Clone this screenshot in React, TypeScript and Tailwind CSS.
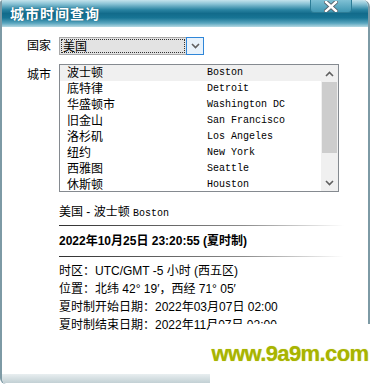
import React from 'react';

const cities = [
  { cn: '波士顿', en: 'Boston' },
  { cn: '底特律', en: 'Detroit' },
  { cn: '华盛顿市', en: 'Washington DC' },
  { cn: '旧金山', en: 'San Francisco' },
  { cn: '洛杉矶', en: 'Los Angeles' },
  { cn: '纽约', en: 'New York' },
  { cn: '西雅图', en: 'Seattle' },
  { cn: '休斯顿', en: 'Houston' },
];

const CloseButton = () => (
  <div className="absolute left-[308px] top-0 w-[42px] h-[13px] rounded-b-[4px] border border-t-0 border-[#2c7c96] bg-[linear-gradient(to_bottom,#7fc0d4,#3f96b2)] flex items-center justify-center">
    <svg width="14" height="11" viewBox="0 0 14 11">
      <path d="M2 1 L12 10 M12 1 L2 10" stroke="#55606a" strokeWidth="4.2" strokeLinecap="square" />
      <path d="M2 1 L12 10 M12 1 L2 10" stroke="#ffffff" strokeWidth="2.4" strokeLinecap="square" />
    </svg>
  </div>
);

const Chevron = ({ up }: { up?: boolean }) => (
  <svg width="9" height="6" viewBox="0 0 9 6">
    <path d={up ? 'M1 5 L4.5 1.5 L8 5' : 'M1 1 L4.5 4.5 L8 1'} stroke="#606060" strokeWidth="1.6" fill="none" />
  </svg>
);

export default function App() {
  return (
    <div className="relative w-[370px] h-[384px] bg-white overflow-hidden text-[12px] text-black font-['Liberation_Sans','Noto_Sans_CJK_SC',sans-serif]">
      <div className="flex flex-col h-full border-x-2 border-[#7d9aa5] rounded-tl-[3px] rounded-tr-[7px] rounded-bl-[6px] overflow-hidden">
        {/* title bar */}
        <div className="relative h-[27px] shrink-0 bg-[linear-gradient(to_bottom,#c4e3ec_0%,#8cc4d6_14%,#2a84a2_36%,#126b8b_50%,#177494_66%,#5aa6bf_86%,#b6d9e3_100%)]">
          <div className="pl-[8px] pt-[6px] text-[14px] leading-[16px] font-bold text-white tracking-[1px] [text-shadow:0_0_1px_#0b4e66]">
            城市时间查询
          </div>
          <CloseButton />
        </div>

        {/* body */}
        <div className="flex-1 flex flex-col pl-[25px] pt-[10px]">
          <div className="flex items-center">
            <span className="w-[32px] leading-[18px]">国家</span>
            <div className="flex w-[145px] h-[18px] border border-[#a8a8a8] bg-[#e3e3e3]">
              <div className="flex-1 m-[1px] border border-dotted border-[#333] leading-[14px] pl-[1px]">美国</div>
              <div className="w-[18px] h-[18px] -mt-px -mr-px border border-[#2f86d8] bg-[#e8f2fb] flex items-center justify-center">
                <Chevron />
              </div>
            </div>
          </div>

          <div className="flex items-start mt-[9px]">
            <span className="w-[32px] pt-[3px] leading-[16px]">城市</span>
            <div className="flex w-[280px] h-[128px] border border-[#858a90] bg-white">
              <div className="flex-1 flex flex-col overflow-hidden">
                {cities.map((c, i) => (
                  <div key={c.en} className={`flex h-[16px] shrink-0 items-center pl-[7px] ${i === 0 ? 'bg-[#f0f0f0]' : ''}`}>
                    <span className="w-[140px] leading-[16px]">{c.cn}</span>
                    <span className="font-['Liberation_Mono',monospace] text-[10px] leading-[16px]">{c.en}</span>
                  </div>
                ))}
              </div>
              <div className="w-[17px] flex flex-col bg-[#f0f0f0]">
                <div className="h-[17px] flex items-center justify-center">
                  <Chevron up />
                </div>
                <div className="h-[71px] mx-[1px] bg-[#cdcdcd]" />
                <div className="flex-1" />
                <div className="h-[17px] flex items-center justify-center">
                  <Chevron />
                </div>
              </div>
            </div>
          </div>

          <div className="flex flex-col pl-[32px] mt-[12px]">
            <div className="leading-[16px]">
              美国 - 波士顿 <span className="font-['Liberation_Mono',monospace] text-[10px]">Boston</span>
            </div>
            <div className="mt-[3px] w-[285px] h-px bg-[linear-gradient(to_right,#303030,#8c8c8c_65%,#ffffff)]" />
            <div className="mt-[6px] leading-[18px] text-[12px] font-bold">2022年10月25日 23:20:55 (夏时制)</div>
            <div className="mt-[6px] w-[285px] h-px bg-[linear-gradient(to_right,#303030,#8c8c8c_65%,#ffffff)]" />
            <div className="mt-[5px] flex flex-col leading-[18px]">
              <span>时区：UTC/GMT -5 小时 (西五区)</span>
              <span>位置：北纬 42° 19′，西经 71° 05′</span>
              <span>夏时制开始日期：2022年03月07日 02:00</span>
              <span>夏时制结束日期：2022年11月07日 02:00</span>
            </div>
          </div>
        </div>

        {/* bottom edge */}
        <div className="h-[9px] shrink-0 mb-[1px] bg-[linear-gradient(to_bottom,#e8eef0,#c2d0d4)]" />
      </div>

      {/* watermark overlay */}
      <div className="absolute right-0 bottom-0 w-[160px] h-[60px] bg-white pt-[19px] text-center">
        <span className="font-['Liberation_Sans',sans-serif] font-bold text-[22px] leading-[22px] text-[#a9b400] tracking-[-0.6px] [text-shadow:0_0_1px_#c8d060]">
          www.9a9m.com
        </span>
      </div>
    </div>
  );
}
